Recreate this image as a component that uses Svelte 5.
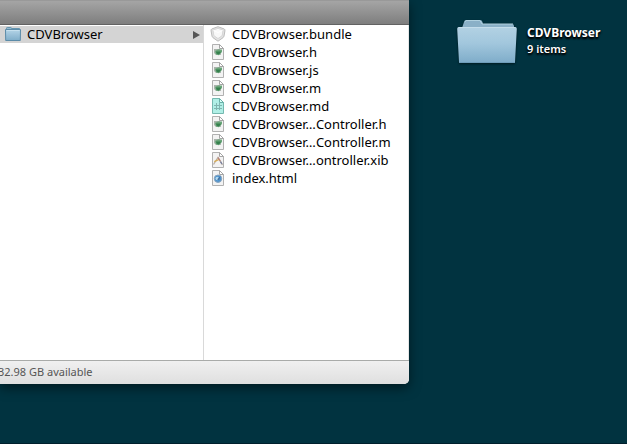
<script>
  const files = [
    { name: 'CDVBrowser.bundle', kind: 'bundle' },
    { name: 'CDVBrowser.h', kind: 'code' },
    { name: 'CDVBrowser.js', kind: 'code' },
    { name: 'CDVBrowser.m', kind: 'code' },
    { name: 'CDVBrowser.md', kind: 'markdown' },
    { name: 'CDVBrowser…Controller.h', kind: 'code' },
    { name: 'CDVBrowser…Controller.m', kind: 'code' },
    { name: 'CDVBrowser…ontroller.xib', kind: 'xib' },
    { name: 'index.html', kind: 'html' }
  ];
</script>

<main class="desktop">
  <section class="window">
    <header class="toolbar"></header>
    <div class="columns">
      <ul class="column parent">
        <li class="row selected">
          <svg class="icon" width="16" height="16" viewBox="0 0 16 16" aria-hidden="true">
            <defs>
              <linearGradient id="small-folder" x2="0" y2="1">
                <stop offset="0" stop-color="#b5d5e8" />
                <stop offset="1" stop-color="#7fadc9" />
              </linearGradient>
            </defs>
            <path d="M1.5 3.5V2.2Q1.5 1.5 2.2 1.5H5.8Q6.5 1.5 6.5 2.5H14.5V4" fill="#93bad1" stroke="#6594ae" />
            <path d="M.5 3.5H15.5L15.3 14.5H.7Z" fill="url(#small-folder)" stroke="#5b8ba8" />
            <path d="M1.5 4.5H14.5" stroke="#c6e0ee" />
          </svg>
          <span>CDVBrowser</span>
          <svg class="arrow" width="7" height="8" viewBox="0 0 7 8" aria-hidden="true">
            <path d="M0 0L7 4L0 8Z" fill="#565656" />
          </svg>
        </li>
      </ul>
      <ul class="column files">
        {#each files as file}
          <li class="row">
            <svg class="icon" width="16" height="16" viewBox="0 0 16 16" aria-hidden="true">
              {#if file.kind === 'bundle'}
                <path d="M8 .7L14.3 3Q15.2 3.5 14.9 5L14 10Q13.8 11 13 11.7L8 15.2L3 11.7Q2.2 11 2 10L1.1 5Q.8 3.5 1.7 3Z" fill="#e3e3e3" stroke="#bcbcbc" />
                <path d="M8 2.3L13 4.1L12.2 9.6L8 12.6L3.8 9.6L3 4.1Z" fill="#f8f8f8" stroke="#d7d7d7" />
                <path d="M3.5 4.5L8 6.5L12.5 4.5" fill="none" stroke="#fff" />
              {:else}
                <path
                  d="M2.5 .5H9.5L13.5 4.5V15.5H2.5Z"
                  fill={file.kind === 'markdown' ? '#b0efe6' : '#f3f3f3'}
                  stroke={file.kind === 'markdown' ? '#75b9b0' : '#b1b1b1'}
                />
                <path
                  d="M9.5 .5V4.5H13.5Z"
                  fill={file.kind === 'markdown' ? '#d9fff9' : '#fff'}
                  stroke={file.kind === 'markdown' ? '#69b0a8' : '#a5a5a5'}
                />
                {#if file.kind === 'code'}
                  <path d="M4 5H10L11 11H6L4 9Z" fill="#a9b3ab" />
                  <path d="M5 7L8 5.5L12 5.5V8L8.8 11.3L6 10.5Z" fill="#6aa67a" />
                  <path d="M6 7.5H10.5V9L8.5 10.5L6.5 9.5Z" fill="#35804d" />
                {:else if file.kind === 'markdown'}
                  <path d="M6.5 5V12M9.5 5V12M4 7.5H12M4 10.5H12" fill="none" stroke="#7fb5b0" />
                {:else if file.kind === 'xib'}
                  <path d="M3.5 12.5L8 5.5L12.5 13" fill="none" stroke="#b9aea5" stroke-width="1.3" />
                  <path d="M4.3 9.7L9 7.5" stroke="#d8ac51" stroke-width="1.3" />
                  <path d="M8 5.5L10.3 9" stroke="#b98078" stroke-width="1.3" />
                  <path d="M10.5 9.7L12 12" stroke="#767d9b" stroke-width="1.3" />
                {:else}
                  <circle cx="8" cy="8.7" r="3.7" fill="#4d94cf" stroke="#8aa4bd" />
                  <circle cx="7.2" cy="8.5" r="1.7" fill="#b4d9f0" />
                  <path d="M7 9.5L10.8 5.8L9 10Z" fill="#3f6a98" />
                {/if}
              {/if}
            </svg>
            <span>{file.name}</span>
          </li>
        {/each}
      </ul>
    </div>
    <footer class="status"><span>32.98 GB available</span></footer>
  </section>

  <aside class="desktop-item">
    <svg width="60" height="46" viewBox="0 0 60 46" aria-hidden="true">
      <defs>
        <linearGradient id="folder-front" x2="0" y2="1">
          <stop offset="0" stop-color="#b2d1e3" />
          <stop offset=".45" stop-color="#a2c7dd" />
          <stop offset="1" stop-color="#7eacc9" />
        </linearGradient>
      </defs>
      <path d="M5 9L7 3Q7.5 1 9 1H23Q25 1 25.5 3L26 5H55Q57 5 57 7V12H5Z" fill="#8ab0c7" />
      <path d="M8 3L9 1.5H23L25 5H56" fill="none" stroke="#afd0df" />
      <path d="M2 8H58Q60 8 59.8 10L58 43Q58 44 56 44H4Q2 44 2 43L.2 10Q0 8 2 8Z" fill="url(#folder-front)" />
      <path d="M1.5 8.5H58.5" stroke="#c4ddeb" />
      <path d="M2 43.5H58" stroke="#6f9dba" />
    </svg>
    <div class="label">
      <strong>CDVBrowser</strong>
      <span>9 items</span>
    </div>
  </aside>
</main>

<style>
  :global(body) {
    margin: 0;
  }
  .desktop {
    box-sizing: border-box;
    min-height: 100vh;
    display: flex;
    padding-bottom: 59px;
    border-bottom: 1px solid #00202d;
    background: #013340;
    overflow: hidden;
    font-family: "Lucida Grande", "Noto Sans", "Open Sans", sans-serif;
    font-size: 13px;
    color: #000;
  }
  .window {
    flex: 1;
    min-width: 0;
    display: flex;
    flex-direction: column;
    background: #fff;
    border-radius: 0 0 5px 0;
    box-shadow: 0 4px 12px rgba(0, 0, 0, 0.5);
  }
  .toolbar {
    box-sizing: border-box;
    height: 25px;
    border-top: 1px solid #999;
    border-bottom: 1px solid #626262;
    background: linear-gradient(#a5a5a5, #7e7e7e);
  }
  .columns {
    flex: 1;
    display: grid;
    grid-template-columns: 204fr 205fr;
  }
  .column {
    box-sizing: border-box;
    min-width: 0;
    margin: 0;
    padding: 0;
    list-style: none;
  }
  .parent {
    border-right: 1px solid #d9d9d9;
  }
  .files {
    border-right: 1px solid #e6e6e6;
  }
  .row {
    box-sizing: border-box;
    display: flex;
    align-items: flex-start;
    height: 18px;
    gap: 6px;
    padding: 0 3px 0 6px;
    border-top: 1px solid #fff;
    line-height: 16px;
    white-space: nowrap;
  }
  .selected {
    padding-left: 5px;
    background: #d4d4d4;
  }
  .icon {
    flex: none;
  }
  .arrow {
    align-self: center;
    margin-left: auto;
  }
  .status {
    box-sizing: border-box;
    height: 24px;
    border-top: 1px solid #a9aba9;
    border-radius: 0 0 5px 0;
    background: linear-gradient(#f0f0f0, #dfdfdf);
    color: #555;
    font-size: 11px;
    line-height: 22px;
    text-indent: -2px;
    white-space: nowrap;
  }
  .desktop-item {
    box-sizing: border-box;
    flex: none;
    width: 218px;
    display: flex;
    align-items: flex-start;
    gap: 10px;
    padding: 19px 0 0 48px;
    color: #fff;
  }
  .desktop-item svg {
    filter: drop-shadow(0 1px 1px rgba(0, 0, 0, 0.5));
  }
  .label {
    display: flex;
    flex-direction: column;
    padding-top: 6px;
    text-shadow: 0 1px 2px #000, 0 2px 2px #000;
  }
  .label strong {
    font-size: 12px;
    line-height: 16px;
  }
  .label span {
    font-size: 11px;
    font-weight: 600;
    line-height: 15px;
  }
</style>
